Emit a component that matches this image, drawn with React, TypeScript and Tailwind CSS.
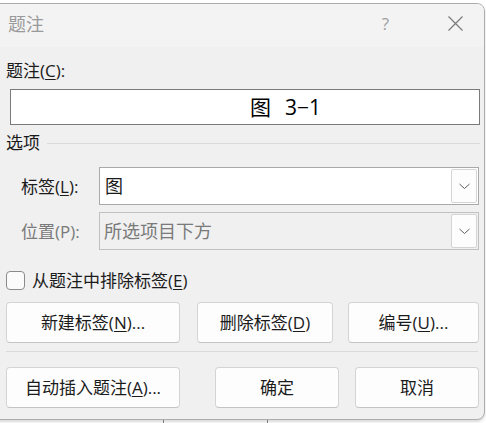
const font = { fontFamily: '"Open Sans", "Noto Sans CJK SC", sans-serif' };

const Key = ({ k }: { k: string }) => <span className="underline underline-offset-2 decoration-1">{k}</span>;

const Btn = ({ children, w }: { children: React.ReactNode; w: string }) => (
  <button
    className={`${w} h-[41px] rounded-[4px] border border-[#d4d4d4] border-b-[#c4c4c4] bg-[#fdfdfd] text-[17px] leading-none text-[#1b1b1b]`}
  >
    {children}
  </button>
);

const Chevron = () => (
  <svg width="11" height="7" viewBox="0 0 11 7">
    <path d="M0.5 1 L5.5 5.5 L10.5 1" fill="none" stroke="#606060" strokeWidth="1" />
  </svg>
);

export default function App() {
  return (
    <div className="relative w-[486px] h-[423px] bg-white overflow-hidden" style={font}>
      {/* background window lines */}
      <div className="absolute left-[163px] bottom-0 w-px h-[6px] bg-[#8a8a8a]" />
      <div className="absolute left-[267px] bottom-0 w-px h-[6px] bg-[#8a8a8a]" />

      <div className="relative mt-[3px] ml-[-10px] w-[495px] h-[417px] rounded-lg border border-[#adadad] bg-[#f0f0f0] overflow-hidden shadow-[0_2px_3px_rgba(0,0,0,0.15)]">
        {/* title bar */}
        <div className="flex items-center h-[43px] bg-[#f3f3f3] pl-[17px] pb-[4px]">
          <span className="text-[18px] text-[#9a9a9a] leading-none">题注</span>
          <span className="ml-auto text-[17px] text-[#a0a0a0] leading-none">?</span>
          <svg width="15" height="15" viewBox="0 0 15 15" className="ml-[59px] mr-[21px]">
            <path d="M0.5 0.5 L14.5 14.5 M14.5 0.5 L0.5 14.5" stroke="#7a7a7a" strokeWidth="1.2" />
          </svg>
        </div>

        <div className="pl-[15px] pr-[4px] text-[#1b1b1b]">
          <div className="pt-[14px] text-[17px] leading-[20px]">
            题注(<Key k="C" />):
          </div>
          <div className="mt-[8px] ml-[4px] h-[36px] border border-[#7a7a7a] bg-white flex items-center pl-[239px] text-[21px] leading-none text-black">
            <span>图</span>
            <span className="ml-[14px]">3−1</span>
          </div>

          <div className="mt-[8px] flex items-center gap-[7px] text-[17px] leading-[20px]">
            <span>选项</span>
            <div className="flex-1 h-px bg-[#dadada]" />
          </div>

          <div className="mt-[14px] flex items-center pr-[1px]">
            <span className="w-[93px] pl-[15px] text-[17px] leading-none">
              标签(<Key k="L" />):
            </span>
            <div className="flex-1 h-[38px] border border-[#a9a9a9] bg-white flex items-center pl-[5px] pr-[1px]">
              <span className="text-[18px] leading-none">图</span>
              <div className="ml-auto w-[26px] h-[34px] rounded-[2px] border border-[#d4d4d4] bg-[#fdfdfd] flex items-center justify-center">
                <Chevron />
              </div>
            </div>
          </div>

          <div className="mt-[7px] flex items-center text-[#7a7a7a] pr-[1px]">
            <span className="w-[93px] pl-[15px] text-[17px] leading-none">位置(P):</span>
            <div className="flex-1 h-[38px] border border-[#c0c0c0] bg-[#f0f0f0] flex items-center pl-[4px] pr-[1px]">
              <span className="text-[18px] leading-none">所选项目下方</span>
              <div className="ml-auto w-[26px] h-[34px] rounded-[2px] border border-[#d4d4d4] bg-[#fdfdfd] flex items-center justify-center">
                <Chevron />
              </div>
            </div>
          </div>

          <label className="mt-[21px] flex items-center gap-[7px] text-[17px] leading-none">
            <span className="w-[19px] h-[19px] rounded-[4px] border border-[#8a8a8a] bg-[#fbfbfb]" />
            <span>
              从题注中排除标签(<Key k="E" />)
            </span>
          </label>

          <div className="mt-[12px] flex">
            <Btn w="w-[174px]">
              新建标签(<Key k="N" />)...
            </Btn>
            <div className="ml-[17px]">
              <Btn w="w-[136px]">
                删除标签(<Key k="D" />)
              </Btn>
            </div>
            <div className="ml-[15px]">
              <Btn w="w-[131px]">
                编号(<Key k="U" />)...
              </Btn>
            </div>
          </div>

          <div className="mt-[8px] mr-[2px] h-px bg-[#dadada]" />

          <div className="mt-[15px] flex">
            <Btn w="w-[174px]">
              自动插入题注(<Key k="A" />)...
            </Btn>
            <div className="ml-[35px]">
              <Btn w="w-[124px]">确定</Btn>
            </div>
            <div className="ml-[16px]">
              <Btn w="w-[124px]">取消</Btn>
            </div>
          </div>
        </div>
      </div>
    </div>
  );
}
